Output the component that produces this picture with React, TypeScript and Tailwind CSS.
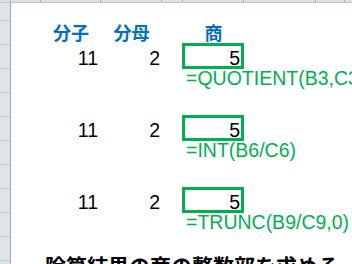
import React from "react";

const latin = "font-['Liberation_Sans','Arial',sans-serif]";
const cjk = "font-['Noto_Sans_CJK_JP','Noto_Sans',sans-serif]";

function NumberRow() {
  return (
    <div className="flex h-[24px]">
      <div className="w-[30px]" />
      <div className={`w-[60px] text-right pr-[3px] pt-[3px] text-[19.5px] leading-[20px] text-black ${latin}`}>11</div>
      <div className={`w-[61px] text-right pr-[2px] pt-[3px] text-[19.5px] leading-[20px] text-black ${latin}`}>2</div>
      <div className="w-[21px]" />
      <div className="w-[61px]">
        <div className={`-ml-[1px] -mt-[2px] h-[26px] w-[62px] border-[3px] border-[#00b050] text-right pr-[1px] pt-[2px] text-[19.5px] leading-[20px] text-black ${latin}`}>
          5
        </div>
      </div>
    </div>
  );
}

function FormulaRow({ text }: { text: string }) {
  return (
    <div className="flex h-[24px]">
      <div className="w-[30px]" />
      <div className="w-[60px]" />
      <div className="w-[61px]" />
      <div className="w-[21px]" />
      <div className={`w-[61px] pl-[3px] whitespace-nowrap text-[19.5px] leading-[18px] text-[#00b050] ${latin}`}>{text}</div>
    </div>
  );
}

function EmptyRow() {
  return <div className="h-[24px]" />;
}

export default function App() {
  const rowHeaders = Array.from({ length: 11 });
  return (
    <div className="relative w-[352px] h-[264px] overflow-hidden bg-white">
      {/* column header strip */}
      <div className="flex h-[3px] bg-[#dde0e4] border-b border-[#c3c7cd]">
        <div className="w-[11px] border-r border-[#a9aeb5]" />
        <div className="w-[30px] border-r border-[#a9aeb5]" />
        <div className="w-[60px] border-r border-[#a9aeb5]" />
        <div className="w-[61px] border-r border-[#a9aeb5]" />
        <div className="w-[21px] border-r border-[#a9aeb5]" />
        <div className="w-[61px] border-r border-[#a9aeb5]" />
        <div className="w-[72px] border-r border-[#a9aeb5]" />
        <div className="w-[29px] border-r border-[#a9aeb5]" />
        <div className="flex-1" />
      </div>
      <div className="flex">
        {/* row header column */}
        <div className="w-[11px] shrink-0 bg-[#e0e3e8] border-r border-[#a3a8b0] flex flex-col">
          <div className="h-[18px] border-b border-[#c3c7cd]" />
          {rowHeaders.map((_, i) => (
            <div key={i} className="h-[24px] border-b border-[#c3c7cd] overflow-hidden flex items-end">
              {i === 8 ? (
                <span className={`-ml-[12px] mb-[4px] text-[10px] leading-[10px] text-black ${latin}`}>10</span>
              ) : null}
            </div>
          ))}
        </div>
        {/* sheet body */}
        <div className="flex-1 flex flex-col">
          <div className="h-[18px]" />
          <div className="flex h-[24px]">
            <div className="w-[30px]" />
            <div className={`w-[60px] text-center pt-[1px] text-[18px] leading-[20px] font-bold text-[#0070c0] ${cjk}`}>分子</div>
            <div className={`w-[61px] text-center pt-[1px] text-[18px] leading-[20px] font-bold text-[#0070c0] ${cjk}`}>分母</div>
            <div className="w-[21px]" />
            <div className={`w-[61px] text-center pt-[1px] text-[18px] leading-[20px] font-bold text-[#0070c0] ${cjk}`}>商</div>
          </div>
          <NumberRow />
          <FormulaRow text="=QUOTIENT(B3,C3)" />
          <EmptyRow />
          <NumberRow />
          <FormulaRow text="=INT(B6/C6)" />
          <EmptyRow />
          <NumberRow />
          <FormulaRow text="=TRUNC(B9/C9,0)" />
          <EmptyRow />
        </div>
      </div>
      <div className={`absolute left-[45px] top-[255px] whitespace-nowrap text-[21px] leading-[21px] font-bold text-black ${cjk}`}>
        除算結果の商の整数部を求める
      </div>
    </div>
  );
}
